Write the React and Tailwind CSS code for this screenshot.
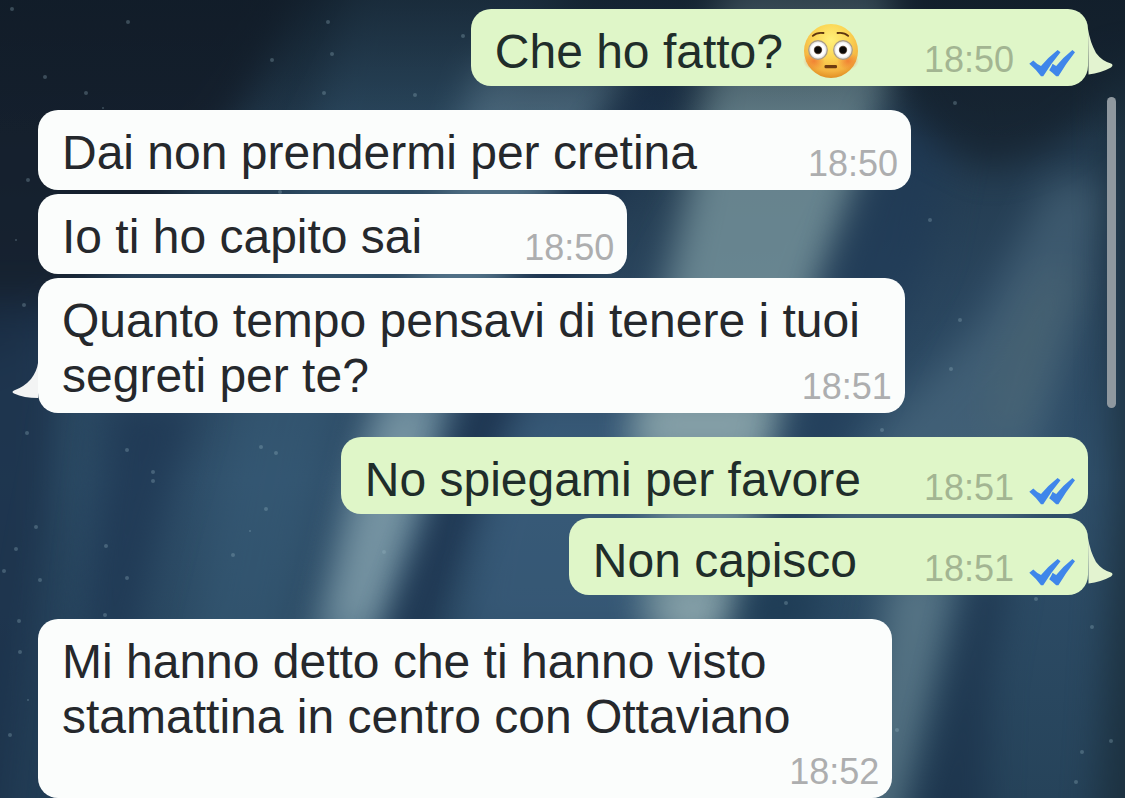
import React from "react";

const MESSAGES = [
  { id: 1, mine: true, lines: ["Che ho fatto?"], emoji: true, time: "18:50", tail: true, room: "pr-[229px]", gap: "" },
  { id: 2, lines: ["Dai non prendermi per cretina"], time: "18:50", room: "pr-[214px]", gap: "mt-6" },
  { id: 3, lines: ["Io ti ho capito sai"], time: "18:50", room: "pr-[205px]", gap: "mt-1" },
  {
    id: 4,
    lines: ["Quanto tempo pensavi di tenere i tuoi", "segreti per te?"],
    time: "18:51",
    tail: true,
    room: "pr-[45px]",
    gap: "mt-1",
  },
  { id: 5, mine: true, lines: ["No spiegami per favore"], time: "18:51", room: "pr-[227px]", gap: "mt-6" },
  { id: 6, mine: true, lines: ["Non capisco"], time: "18:51", tail: true, room: "pr-[231px]", gap: "mt-1" },
  {
    id: 7,
    lines: ["Mi hanno detto che ti hanno visto", "stamattina in centro con Ottaviano"],
    time: "18:52",
    ownTimeRow: true,
    room: "pr-[102px]",
    gap: "mt-6",
  },
];

// [points, colour, opacity]
const STREAKS = [
  ["-80,-60 330,-60 240,110 140,240 40,330 -80,380", "#121a26", 0.8],
  ["-80,300 60,300 60,560 50,720 40,860 -80,860", "#1b3049", 0.8],
  ["70,400 115,400 90,520 60,640 30,860 0,860 40,560", "#28475f", 0.5],
  ["110,400 200,400 165,520 140,620 120,860 60,860 90,560", "#1c3450", 0.7],
  ["360,-60 600,-60 430,200 330,430 240,860 150,860 230,430", "#3b627e", 0.4],
  ["480,60 640,60 520,250 450,410 425,520 385,620 340,860 240,860 325,600 370,420", "#6a8da2", 0.6],
  ["385,400 440,400 412,520 376,630 325,630 350,520", "#9cb6bb", 0.5],
  ["650,60 700,60 580,260 515,415 475,520 435,620 380,860 330,860 395,620 432,520 462,415 560,200", "#1a304c", 0.85],
  ["520,400 660,400 660,640 460,640 480,520", "#43688a", 0.45],
  ["730,-60 900,-60 890,90 860,190 820,280 778,430 758,520 728,620 640,620 655,520 630,430 668,280 690,180", "#7d9ba2", 0.75],
  ["645,405 770,405 762,445 635,445", "#a9bfc1", 0.55],
  ["880,110 960,110 930,260 850,430 820,520 800,620 755,620 780,520 790,430 830,280", "#1f3a57", 0.65],
  ["900,-60 1200,-60 1200,50 1110,100 1050,150 990,170 930,140 900,90", "#14202c", 0.75],
  ["1050,180 1110,180 1085,300 1040,450 1010,560 790,560 890,420 980,320", "#58778a", 0.45],
  ["1040,270 1085,270 1060,330 1025,430 980,430 1000,350", "#5f7470", 0.2],
  ["665,590 732,590 722,640 650,640", "#9eb7bb", 0.75],
  ["752,585 830,585 800,640 730,640", "#1c3a52", 0.7],
  ["890,570 960,570 940,660 915,760 890,860 850,860", "#7896a0", 0.55],
  ["975,570 1010,570 990,680 985,860 905,860 940,720", "#182d46", 0.6],
  ["1110,60 1200,60 1200,860 1095,860 1115,500", "#1a2d3a", 0.8],
];

const DUST = [
  [128, 22, 2], [45, 77, 2], [86, 93, 2], [12, 9, 2], [103, 108, 1], [272, 60, 2], [332, 54, 2], [324, 93, 2],
  [415, 95, 2], [463, 36, 2], [328, 22, 2], [955, 103, 2], [930, 220, 2], [951, 369, 2], [960, 320, 2],
  [27, 433, 2], [127, 450, 2], [153, 472, 2], [153, 481, 2], [36, 527, 2], [16, 549, 2], [106, 546, 2],
  [127, 578, 2], [40, 580, 2], [4, 571, 2], [233, 555, 2], [266, 509, 2], [121, 629, 1], [105, 615, 2],
  [102, 626, 1], [19, 621, 2], [261, 447, 2], [276, 453, 2], [250, 531, 1], [384, 552, 2],
  [1082, 752, 2], [1111, 741, 2], [1076, 782, 2], [1036, 599, 2], [1092, 627, 2], [882, 430, 2], [786, 603, 2],
  [897, 730, 2], [20, 652, 2], [28, 700, 1], [10, 735, 2], [24, 305, 2], [16, 240, 1], [28, 180, 2], [280, 192, 2],
];

function Wallpaper() {
  return (
    <svg
      className="absolute inset-0 h-full w-full"
      viewBox="0 0 1125 798"
      preserveAspectRatio="xMidYMid slice"
      aria-hidden="true"
    >
      <defs>
        <linearGradient id="sky" x1="0" y1="0" x2="0" y2="1">
          <stop offset="0" stopColor="#1c3040" />
          <stop offset="0.35" stopColor="#29445c" />
          <stop offset="0.6" stopColor="#2f4f6a" />
          <stop offset="1" stopColor="#26435a" />
        </linearGradient>
        <linearGradient id="fade" x1="0" y1="0" x2="0" y2="1">
          <stop offset="0" stopColor="#101c28" stopOpacity="0.6" />
          <stop offset="1" stopColor="#101c28" stopOpacity="0" />
        </linearGradient>
        <filter id="soft" x="-50%" y="-50%" width="200%" height="200%" colorInterpolationFilters="sRGB">
          <feGaussianBlur stdDeviation="18" />
        </filter>
      </defs>
      <rect width="1125" height="798" fill="url(#sky)" />
      {STREAKS.map(([points, color, opacity]) => (
        <polygon key={points} points={points} fill={color} opacity={opacity} filter="url(#soft)" />
      ))}
      <rect width="1125" height="140" fill="url(#fade)" />
      {DUST.map(([x, y, r]) => (
        <circle key={`${x}-${y}`} cx={x} cy={y} r={r} fill="#9ab8c8" opacity="0.3" />
      ))}
    </svg>
  );
}

function FlushedFace() {
  return (
    <svg className="-my-1 ml-5 h-14 w-14 shrink-0" viewBox="0 0 56 56" role="img" aria-label="😳">
      <defs>
        <radialGradient id="face" cx="0.5" cy="0.3" r="0.72">
          <stop offset="0" stopColor="#fff07a" />
          <stop offset="0.45" stopColor="#fbd655" />
          <stop offset="0.8" stopColor="#f4b240" />
          <stop offset="1" stopColor="#df8a20" />
        </radialGradient>
        <radialGradient id="blush">
          <stop offset="0" stopColor="#ef6a2c" stopOpacity="0.7" />
          <stop offset="1" stopColor="#ef6a2c" stopOpacity="0" />
        </radialGradient>
        <radialGradient id="eye">
          <stop offset="0.7" stopColor="#ffffff" />
          <stop offset="1" stopColor="#d4d4d2" />
        </radialGradient>
      </defs>
      <circle cx="28" cy="27" r="27" fill="url(#face)" />
      <ellipse cx="11" cy="37" rx="11" ry="9" fill="url(#blush)" />
      <ellipse cx="45" cy="37" rx="11" ry="9" fill="url(#blush)" />
      <path d="M9.800 11.800Q14 8 20.500 9" fill="none" stroke="#5d3510" strokeWidth="1.800" strokeLinecap="round" />
      <path d="M45.200 11.800Q41 8 34.500 9" fill="none" stroke="#5d3510" strokeWidth="1.800" strokeLinecap="round" />
      <circle cx="15" cy="26" r="9.300" fill="url(#eye)" stroke="#a89a86" strokeWidth="1.200" />
      <circle cx="40" cy="26" r="9.300" fill="url(#eye)" stroke="#a89a86" strokeWidth="1.200" />
      <circle cx="15" cy="26" r="4.200" fill="#5b4a3c" />
      <circle cx="40" cy="26" r="4.200" fill="#5b4a3c" />
      <circle cx="15" cy="26" r="3.300" fill="#0c0a08" />
      <circle cx="40" cy="26" r="3.300" fill="#0c0a08" />
      <rect x="21.500" y="41" width="12.500" height="3.200" rx="1.300" fill="#6d3b10" />
    </svg>
  );
}

function ReadTicks() {
  return (
    <svg className="h-7 w-[46px]" viewBox="0 0 46 28" role="img" aria-label="Letto" fill="#3f86ea">
      <path d="M0.300 13.800L4.300 10.400Q8 14.200 12 16Q19 7.500 28.600 0L31.500 2.200Q22 13.500 14.200 26.200H12Q7 19.500 0.300 13.800Z" />
      <path d="M20.200 20.200Q22.400 17 23.600 13.800Q25.500 15.200 27.200 16Q34 7.500 43.400 0L46 2.200Q37 13.500 29.400 26.200H27.200Q24 23 20.200 20.200Z" />
    </svg>
  );
}

function Tail({ mine }) {
  return mine ? (
    <svg className="absolute bottom-[10px] left-full h-12 w-[25px]" viewBox="0 0 25 48" aria-hidden="true">
      <path d="M0 1Q2 14 8 25Q14 33 23 35.500Q26 37 23 39.500Q13 45 0.500 46.500Z" fill="#e3f3d0" />
    </svg>
  ) : (
    <svg className="absolute bottom-[14px] right-full h-9 w-[26px]" viewBox="0 0 26 36" aria-hidden="true">
      <path d="M26 0Q25 8 19 16Q12 24 2 27.500Q-1 29 2 30.500Q12 35 26 35Z" fill="#f3f4f4" />
    </svg>
  );
}

function Message({ mine, lines, emoji, time, tail, ownTimeRow, room, gap }) {
  const bottom = mine ? "pb-[7px]" : ownTimeRow ? "pb-[54px]" : "pb-[10px]";
  return (
    <li className={`flex ${mine ? "justify-end" : "justify-start"} ${gap}`}>
      <div className={`relative grid rounded-[20px] ${mine ? "bg-[#dff6c8]" : "bg-[#fbfdfc]"}`}>
        <div
          className={`col-start-1 row-start-1 flex items-center pl-6 pt-[15px] text-[48px] leading-[55px] ${
            mine ? "text-[#1f2d2a]" : "text-[#25282c]"
          } ${bottom} ${room}`}
        >
          <p className="flex flex-col items-start">
            {lines.map((line) => (
              <span key={line}>{line} </span>
            ))}
          </p>
          {emoji && <FlushedFace />}
        </div>
        <div className="col-start-1 row-start-1 flex items-end gap-[15px] self-end justify-self-end pb-2 pr-[13px]">
          <time className={`text-[36px] leading-9 ${mine ? "text-[#a3b592]" : "text-[#adaeaf]"}`}>{time}</time>
          {mine && <ReadTicks />}
        </div>
        {tail && <Tail mine={mine} />}
      </div>
    </li>
  );
}

export default function App() {
  return (
    <main className="relative min-h-screen overflow-hidden bg-[#29445c] font-['Liberation_Sans',Arial,sans-serif]">
      <Wallpaper />
      <ol className="relative flex flex-col pl-[38px] pr-[37px] pt-[9px]">
        {MESSAGES.map((m) => (
          <Message key={m.id} {...m} />
        ))}
      </ol>
      <div className="absolute right-[9px] top-[97px] h-[311px] w-[9px] rounded-full bg-[#8f989f]" aria-hidden="true" />
    </main>
  );
}
